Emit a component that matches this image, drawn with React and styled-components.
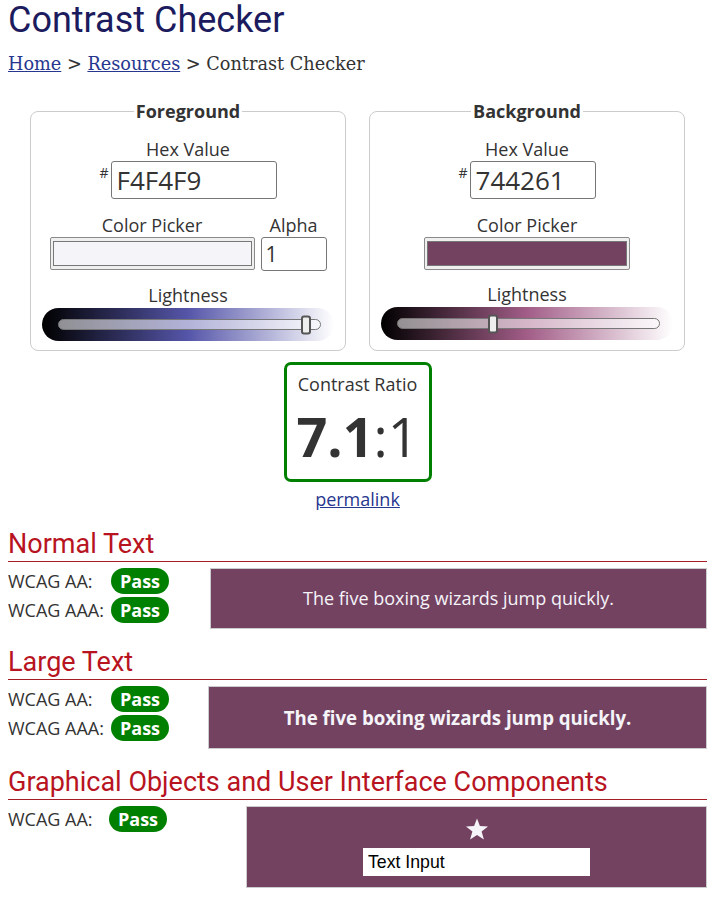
import React from "react";
import styled, { createGlobalStyle } from "styled-components";

const Global = createGlobalStyle`
  html, body { margin: 0; padding: 0; background: #fff; }
  body { font-family: "Open Sans", "DejaVu Sans", sans-serif; color: #333; }
  * { box-sizing: border-box; }
`;

const Page = styled.div`
  width: 715px;
  padding: 0 8px 20px;
`;

const Title = styled.h1`
  margin: 0;
  font-family: Roboto, "Liberation Sans", sans-serif;
  font-weight: 400;
  font-size: 36px;
  line-height: 40px;
  color: #1b1b5e;
`;

const Crumbs = styled.nav`
  margin-top: 12px;
  font-family: "DejaVu Serif", "Liberation Serif", serif;
  font-size: 17.7px;
  line-height: 24px;
  color: #333;
`;

const CrumbLink = styled.a`
  color: #27368f;
  text-decoration: underline;
`;

const Panels = styled.div`
  display: flex;
  justify-content: center;
  gap: 23px;
  margin-top: 24px;
`;

const Fieldset = styled.fieldset`
  width: 316px;
  margin: 0;
  padding: 0 0 9px;
  border: 1px solid #ccc;
  border-radius: 8px;
  min-width: 0;
`;

const Legend = styled.legend`
  margin: 0 auto;
  padding: 0 2px;
  font-weight: 700;
  font-size: 18px;
  line-height: 23px;
  color: #333;
`;

const FieldBody = styled.div`
  display: flex;
  flex-direction: column;
  align-items: center;
  padding-top: 15px;
`;

const Label = styled.div`
  font-size: 18px;
  line-height: 23px;
  color: #333;
  text-align: center;
  margin-top: ${(p) => p.$mt || 0}px;
`;

const HexRow = styled.div`
  display: flex;
  align-items: flex-start;
`;

const Hash = styled.span`
  font-size: 14px;
  line-height: 14px;
  margin-top: 5px;
  margin-right: 2px;
  color: #333;
`;

const HexInput = styled.input`
  width: ${(p) => p.$w}px;
  height: 38px;
  border: 1px solid #767676;
  border-radius: 3px;
  padding: 0 5px;
  font-family: "Open Sans", sans-serif;
  font-size: 26px;
  color: #333;
  background: #fff;
  outline: none;
`;

const PickerRow = styled.div`
  display: flex;
  gap: 6px;
  margin-top: 15px;
`;

const Group = styled.div`
  display: flex;
  flex-direction: column;
  align-items: center;
`;

const Swatch = styled.div`
  width: ${(p) => p.$w}px;
  height: 33px;
  border: 1px solid #8a8a8a;
  border-radius: 2px;
  background: #efefef;
  padding: 3px 2px;
`;

const SwatchFill = styled.div`
  width: 100%;
  height: 100%;
  border: 1px solid #777;
  background: ${(p) => p.$c};
`;

const AlphaInput = styled.input`
  width: 66px;
  height: 34px;
  border: 1px solid #767676;
  border-radius: 3px;
  padding: 0 4px;
  font-family: "Open Sans", sans-serif;
  font-size: 21px;
  color: #333;
  background: #fff;
  outline: none;
`;

const Slider = styled.div`
  width: 292px;
  height: 33px;
  margin-top: 1px;
  border-radius: 17px;
  background: linear-gradient(to right, #000, ${(p) => p.$mid}, #fff);
  display: flex;
  align-items: center;
  padding: 0 13px 0 16px;
`;

const Track = styled.div`
  position: relative;
  flex: 1;
  height: 11px;
  border: 1px solid #777;
  border-radius: 6px;
  background: rgba(255, 255, 255, 0.55);
`;

const Thumb = styled.div`
  position: absolute;
  top: 50%;
  width: 10px;
  height: 19px;
  margin-left: -5px;
  transform: translateY(-50%);
  background: #eee;
  border: 2px solid #555;
  border-radius: 3px;
`;

const RatioBox = styled.div`
  width: 148px;
  margin: 11px auto 0;
  border: 3px solid #008000;
  border-radius: 7px;
  padding: 8px 0 15px;
  text-align: center;
`;

const RatioValue = styled.div`
  margin-top: 12px;
  font-size: 54px;
  line-height: 56px;
  color: #333;
  b { font-weight: 700; }
`;

const Permalink = styled.div`
  margin-top: 6px;
  text-align: center;
  font-size: 18px;
  line-height: 23px;
  a { color: #27368f; text-decoration: underline; }
`;

const SectionTitle = styled.h2`
  margin: 18px 0 0;
  padding-bottom: 2px;
  border-bottom: 1px solid #a51d24;
  font-family: Roboto, "Liberation Sans", sans-serif;
  font-weight: 400;
  font-size: 27px;
  line-height: 30px;
  color: #b8141f;
`;

const ResultRow = styled.div`
  display: flex;
  align-items: flex-start;
  margin-top: 6px;
`;

const Checks = styled.div`
  display: flex;
  flex-direction: column;
  gap: 3px;
`;

const Check = styled.div`
  display: flex;
  align-items: center;
  height: 26px;
`;

const CheckLabel = styled.span`
  width: ${(p) => p.$w}px;
  font-size: 18px;
  line-height: 23px;
  color: #333;
`;

const Pass = styled.span`
  display: inline-block;
  height: 26px;
  padding: 0 9px;
  border-radius: 13px;
  background: #008000;
  color: #fff;
  font-weight: 700;
  font-size: 18px;
  line-height: 26px;
`;

const Sample = styled.div`
  margin-left: auto;
  width: ${(p) => p.$w}px;
  border: 1px solid #ccc;
  background: #744261;
  color: #f4f4f9;
  text-align: center;
  padding: 18px 8px;
  font-size: ${(p) => (p.$large ? "18.67px" : "18px")};
  font-weight: ${(p) => (p.$large ? 700 : 400)};
  line-height: ${(p) => (p.$large ? "25px" : "23px")};
`;

const UiSample = styled.div`
  margin-left: auto;
  width: ${(p) => p.$w}px;
  border: 1px solid #ccc;
  background: #744261;
  padding: 11px 0;
  display: flex;
  flex-direction: column;
  align-items: center;
  gap: 7px;
`;

const TextInput = styled.input`
  width: 227px;
  height: 28px;
  border: none;
  background: #fff;
  padding: 0 5px;
  font-family: "Liberation Sans", Arial, sans-serif;
  font-size: 17.7px;
  color: #000;
  outline: none;
`;

function Star() {
  return (
    <svg width="24" height="23" viewBox="0 0 24 23" aria-hidden="true">
      <polygon
        points="12,0.5 14.9,8.1 23,8.4 16.6,13.4 18.9,21.6 12,16.9 5.1,21.6 7.4,13.4 1,8.4 9.1,8.1"
        fill="#f4f4f9"
      />
    </svg>
  );
}

function ColorPanel({ title, hex, hexWidth, color, swatchWidth, alpha, mid, lightness }) {
  return (
    <Fieldset>
      <Legend>{title}</Legend>
      <FieldBody>
        <Label>Hex Value</Label>
        <HexRow>
          <Hash>#</Hash>
          <HexInput $w={hexWidth} defaultValue={hex} />
        </HexRow>
        <PickerRow>
          <Group>
            <Label>Color Picker</Label>
            <Swatch $w={swatchWidth}>
              <SwatchFill $c={color} />
            </Swatch>
          </Group>
          {alpha && (
            <Group>
              <Label>Alpha</Label>
              <AlphaInput defaultValue="1" />
            </Group>
          )}
        </PickerRow>
        <Label $mt={13}>Lightness</Label>
        <Slider $mid={mid}>
          <Track>
            <Thumb style={{ left: `calc(5px + (100% - 10px) * ${lightness})` }} />
          </Track>
        </Slider>
      </FieldBody>
    </Fieldset>
  );
}

export default function App() {
  return (
    <>
      <Global />
      <Page>
        <Title>Contrast Checker</Title>
        <Crumbs>
          <CrumbLink href="#">Home</CrumbLink> &gt; <CrumbLink href="#">Resources</CrumbLink> &gt; Contrast Checker
        </Crumbs>

        <Panels>
          <ColorPanel
            title="Foreground"
            hex="F4F4F9"
            hexWidth={166}
            color="#f4f4f9"
            swatchWidth={205}
            alpha
            mid="hsl(240, 33%, 50%)"
            lightness={0.965}
          />
          <ColorPanel
            title="Background"
            hex="744261"
            hexWidth={126}
            color="#744261"
            swatchWidth={206}
            mid="hsl(323, 27%, 50%)"
            lightness={0.357}
          />
        </Panels>

        <RatioBox>
          <Label>Contrast Ratio</Label>
          <RatioValue>
            <b>7.1</b>:1
          </RatioValue>
        </RatioBox>
        <Permalink>
          <a href="#">permalink</a>
        </Permalink>

        <SectionTitle>Normal Text</SectionTitle>
        <ResultRow>
          <Checks>
            <Check>
              <CheckLabel $w={103}>WCAG AA:</CheckLabel>
              <Pass>Pass</Pass>
            </Check>
            <Check>
              <CheckLabel $w={103}>WCAG AAA:</CheckLabel>
              <Pass>Pass</Pass>
            </Check>
          </Checks>
          <Sample $w={497}>The five boxing wizards jump quickly.</Sample>
        </ResultRow>

        <SectionTitle>Large Text</SectionTitle>
        <ResultRow>
          <Checks>
            <Check>
              <CheckLabel $w={103}>WCAG AA:</CheckLabel>
              <Pass>Pass</Pass>
            </Check>
            <Check>
              <CheckLabel $w={103}>WCAG AAA:</CheckLabel>
              <Pass>Pass</Pass>
            </Check>
          </Checks>
          <Sample $w={499} $large>
            The five boxing wizards jump quickly.
          </Sample>
        </ResultRow>

        <SectionTitle>Graphical Objects and User Interface Components</SectionTitle>
        <ResultRow>
          <Checks>
            <Check>
              <CheckLabel $w={101}>WCAG AA:</CheckLabel>
              <Pass>Pass</Pass>
            </Check>
          </Checks>
          <UiSample $w={461}>
            <Star />
            <TextInput defaultValue="Text Input" />
          </UiSample>
        </ResultRow>
      </Page>
    </>
  );
}
